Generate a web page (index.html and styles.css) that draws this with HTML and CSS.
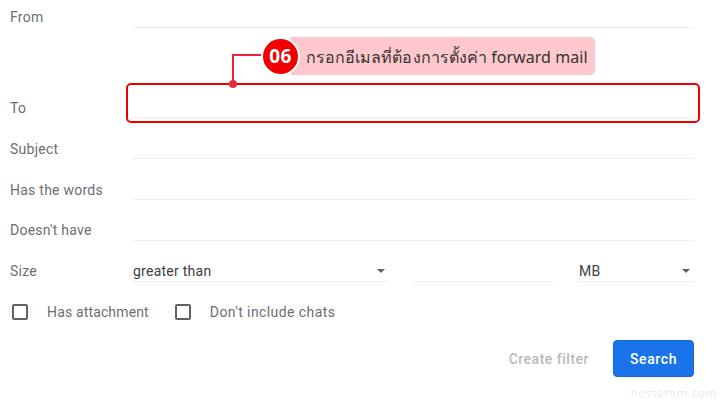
FILE: index.html
```html
<!DOCTYPE html>
<html lang="th">
<head>
  <meta charset="UTF-8">
  <title>Gmail filter</title>
  <link rel="stylesheet" href="styles.css">
</head>
<body>
  <div class="page">
    <form class="filter-form">
      <div class="row row-from">
        <label>From</label>
        <div class="field"></div>
      </div>
      <div class="row row-low">
        <label>To</label>
        <div class="field"></div>
      </div>
      <div class="row row-low">
        <label>Subject</label>
        <div class="field"></div>
      </div>
      <div class="row row-low">
        <label>Has the words</label>
        <div class="field"></div>
      </div>
      <div class="row">
        <label>Doesn't have</label>
        <div class="field"></div>
      </div>
      <div class="row">
        <label>Size</label>
        <div class="size-fields">
          <div class="field select select-size">greater than<span class="caret"></span></div>
          <div class="field size-value"></div>
          <div class="field select select-unit">MB<span class="caret"></span></div>
        </div>
      </div>
      <div class="checks">
        <div class="check check-first"><span class="box"></span>Has attachment</div>
        <div class="check check-second"><span class="box"></span>Don't include chats</div>
      </div>
      <div class="actions">
        <span class="create-filter">Create filter</span>
        <button type="button" class="search-btn">Search</button>
      </div>
    </form>

    <div class="highlight"></div>
    <div class="connector"></div>
    <div class="connector-dot"></div>
    <div class="callout">
      <span class="callout-num">06</span>
      <span class="callout-text">กรอกอีเมลที่ต้องการตั้งค่า forward mail</span>
    </div>
    <div class="watermark">hostatom.com</div>
  </div>
</body>
</html>
```

FILE: styles.css
```css
html, body {
  margin: 0;
  padding: 0;
  background-color: #fff;
}

.page {
  position: relative;
  width: 720px;
  height: 400px;
  overflow: hidden;
  font-family: Roboto, "Noto Sans", sans-serif;
  font-size: 14px;
  letter-spacing: 0.25px;
  color: #6b6f73;
}

.filter-form {
  padding: 0 26px 0 10px;
}

.row {
  display: flex;
  align-items: flex-end;
  height: 41px;
}

.row-from {
  height: 28px;
  margin-bottom: 49px;
}

.row label {
  width: 122px;
  flex-shrink: 0;
  line-height: 18px;
  margin-bottom: 2px;
}

.row-low label {
  margin-bottom: 1px;
}

.field {
  flex: 1;
  height: 100%;
  box-sizing: border-box;
  padding-left: 1px;
  border-bottom: 1px solid #eeeeee;
  color: #3c4043;
}

.size-fields {
  flex: 1;
  height: 100%;
  display: flex;
  gap: 24px;
}

.select {
  position: relative;
  display: flex;
  align-items: flex-end;
  padding-bottom: 1px;
  line-height: 18px;
}

.select-size {
  flex: none;
  width: 257px;
}

.size-value {
  flex: none;
  width: 141px;
}

.select-unit {
  flex: none;
  width: 116px;
}

.caret {
  position: absolute;
  right: 4px;
  top: 28px;
  border-left: 4px solid transparent;
  border-right: 4px solid transparent;
  border-top: 4px solid #5f6368;
}

.checks {
  display: flex;
  align-items: center;
  height: 22px;
  margin-top: 19px;
}

.check {
  display: flex;
  align-items: center;
  gap: 19px;
}

.check-first {
  margin-left: 2px;
  margin-right: 26px;
  letter-spacing: 0.15px;
}

.check-second {
  letter-spacing: 0.42px;
}

.box {
  width: 12px;
  height: 12px;
  border: 2px solid #5f6368;
  border-radius: 2px;
}

.actions {
  display: flex;
  justify-content: flex-end;
  align-items: center;
  gap: 24px;
  margin-top: 17px;
}

.create-filter {
  color: #bababa;
  font-weight: 500;
  letter-spacing: 0.5px;
}

.search-btn {
  width: 81px;
  height: 37px;
  padding: 0;
  background-color: #1a73e8;
  color: #fff;
  border: 1px solid #1967d2;
  border-radius: 4px;
  font-family: inherit;
  font-size: 14px;
  font-weight: 500;
  letter-spacing: 0.6px;
}

.highlight {
  position: absolute;
  left: 126px;
  top: 83px;
  width: 570px;
  height: 36px;
  border: 2px solid #f00000;
  border-radius: 5px;
}

.connector {
  position: absolute;
  left: 232px;
  top: 54px;
  width: 30px;
  height: 29px;
  border-left: 2px solid #e8283a;
  border-top: 2px solid #e8283a;
}

.connector-dot {
  position: absolute;
  left: 229px;
  top: 80px;
  width: 8px;
  height: 8px;
  background-color: #e8283a;
  border-radius: 50%;
}

.callout {
  position: absolute;
  left: 263px;
  top: 37px;
  display: flex;
  align-items: center;
}

.callout-num {
  position: relative;
  width: 35px;
  height: 35px;
  flex-shrink: 0;
  background-color: #f00000;
  color: #fff;
  border-radius: 50%;
  box-shadow: 0 0 0 2px #fff;
  font-family: "Open Sans", sans-serif;
  font-size: 19px;
  font-weight: 700;
  letter-spacing: 0.5px;
  line-height: 35px;
  text-align: center;
}

.callout-text {
  width: 307px;
  height: 38px;
  margin-left: -10px;
  padding-left: 18px;
  box-sizing: border-box;
  background-color: #fec8cd;
  border-radius: 5px;
  font-family: "Noto Sans", "DejaVu Sans", sans-serif;
  font-size: 16px;
  letter-spacing: 0.05px;
  line-height: 40px;
  color: #333;
  white-space: nowrap;
}

.watermark {
  position: absolute;
  right: 3px;
  bottom: 0;
  font-family: "Open Sans", sans-serif;
  font-size: 11px;
  letter-spacing: 1px;
  color: #e8e8e8;
}
```
